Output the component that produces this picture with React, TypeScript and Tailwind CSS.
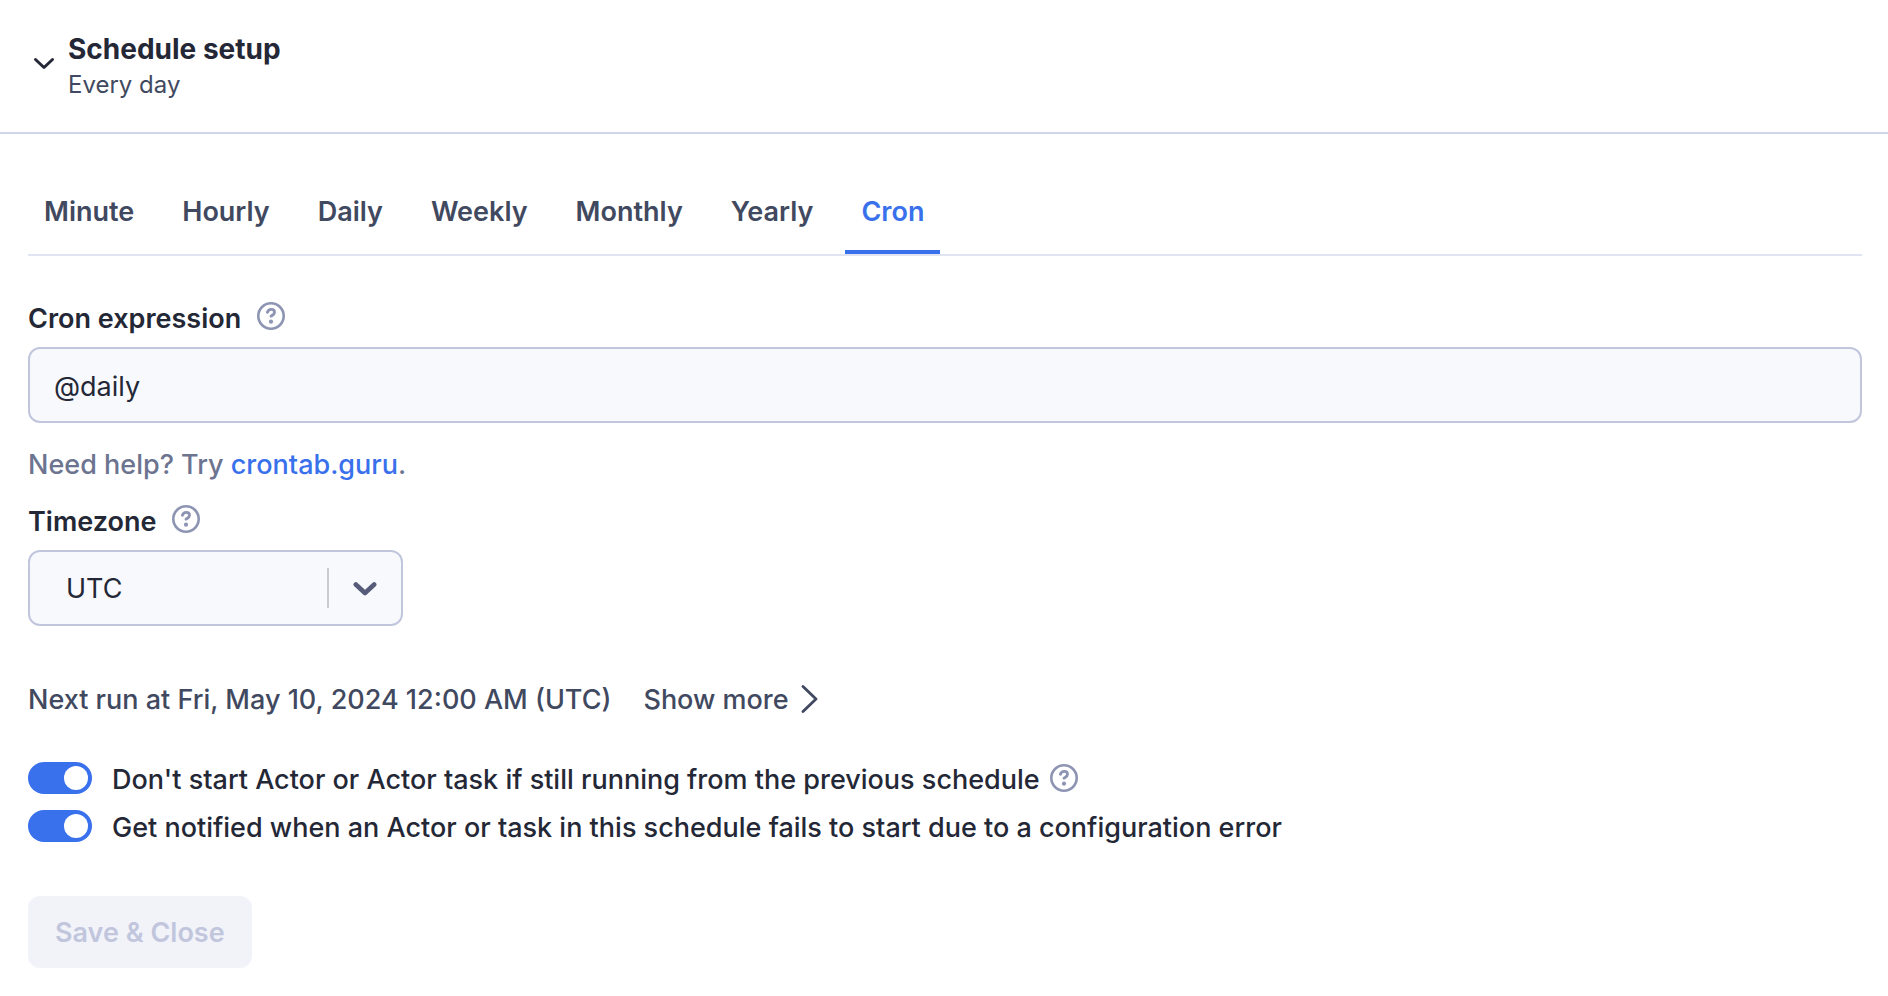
import { useState } from 'react';

const TABS = ['Minute', 'Hourly', 'Daily', 'Weekly', 'Monthly', 'Yearly', 'Cron'];

function HelpIcon() {
  return (
    <svg width="28" height="28" viewBox="0 0 28 28" fill="none" stroke="#8d95b3" aria-hidden="true">
      <circle cx="14" cy="14" r="12.7" strokeWidth="2.6" />
      <path d="M10.4 10.2C11 8.4 12.4 7.4 14.2 7.4C16.2 7.4 17.5 8.6 17.5 10.3C17.5 12.3 15.6 13 14 14.2" strokeWidth="2.9" strokeLinecap="round" strokeLinejoin="round" />
      <circle cx="14" cy="19.7" r="2.1" fill="#8d95b3" stroke="none" />
    </svg>
  );
}

function HelpButton({ label }: { label: string }) {
  return (
    <button type="button" aria-label={label} className="shrink-0">
      <HelpIcon />
    </button>
  );
}

function FieldLabel({ htmlFor, help, children }: { htmlFor: string; help: string; children: string }) {
  return (
    <div className="flex items-start gap-4">
      <label htmlFor={htmlFor} className="font-semibold">{children}</label>
      <span className="flex pt-[3px]"><HelpButton label={help} /></span>
    </div>
  );
}

function Switch({ id }: { id: string }) {
  const [on, setOn] = useState(true);
  return (
    <input
      id={id}
      type="checkbox"
      role="switch"
      checked={on}
      onChange={(e) => setOn(e.target.checked)}
      className="flex h-8 w-16 shrink-0 cursor-pointer appearance-none items-center justify-start rounded-full bg-[#c1c6dd] p-1 before:size-6 before:rounded-full before:bg-white before:content-[''] checked:justify-end checked:bg-[#3970ec]"
    />
  );
}

export default function App() {
  const [tab, setTab] = useState('Cron');
  const [open, setOpen] = useState(true);
  return (
    <main className="min-h-screen bg-white font-['Inter',sans-serif] text-[27px] leading-10 text-[#242836]">
      <header className="border-b-2 border-[#d0d5e9] pt-[29px] pb-[31px] pl-8">
        <button type="button" aria-expanded={open} onClick={() => setOpen(!open)} className="flex items-center gap-3 text-left">
          <svg width="24" height="24" viewBox="0 0 24 24" fill="none" stroke="#242836" strokeWidth="3" strokeLinecap="round" strokeLinejoin="round" aria-hidden="true">
            <path d="M3.5 6.5L12 14.5L20.5 6.5" />
          </svg>
          <span className="flex flex-col">
            <span className="text-[28px] leading-10 font-bold">Schedule setup</span>
            <span className="text-2xl leading-8 text-[#414960]">Every day</span>
          </span>
        </button>
      </header>

      {open && (
        <form className="flex flex-col items-start pt-10 pr-[26px] pl-7" onSubmit={(e) => e.preventDefault()}>
          <div role="tablist" aria-label="Schedule frequency" className="flex gap-4 self-stretch border-b-2 border-[#e0e4f3]">
            {TABS.map((name) => (
              <button
                key={name}
                type="button"
                role="tab"
                aria-selected={tab === name}
                onClick={() => setTab(name)}
                className={
                  tab === name
                    ? 'border-b-4 border-[#3970ec] px-4 py-[18px] font-semibold text-[#3970ec]'
                    : 'border-b-4 border-transparent px-4 py-[18px] font-semibold text-[#414960]'
                }
              >
                {name}
              </button>
            ))}
          </div>

          <div className="mt-[43px]">
            <FieldLabel htmlFor="cron" help="About cron expressions">Cron expression</FieldLabel>
          </div>
          <input
            id="cron"
            type="text"
            defaultValue="@daily"
            className="mt-2 h-19 self-stretch rounded-xl border-2 border-[#c1c6dd] bg-[#f8f9fd] px-6 pt-0.5 outline-none"
          />
          <p className="mt-[22px] font-medium text-[#6c7490]">
            Need help? Try <a href="https://crontab.guru" className="text-[#3970ec]">crontab.guru</a>.
          </p>

          <div className="mt-[17px]">
            <FieldLabel htmlFor="timezone" help="About timezones">Timezone</FieldLabel>
          </div>
          <div className="relative mt-2 w-[375px] max-w-full">
            <select
              id="timezone"
              defaultValue="UTC"
              className="h-19 w-full appearance-none rounded-xl border-2 border-[#c1c6dd] bg-[#f8f9fd] pt-0.5 pr-20 pl-9 outline-none"
            >
              <option>UTC</option>
            </select>
            <div className="pointer-events-none absolute inset-y-0 right-[26px] flex items-center gap-6">
              <span className="h-10 w-0.5 bg-[#cccccc]" />
              <svg width="24" height="24" viewBox="0 0 24 24" fill="none" stroke="#555b78" strokeWidth="4.6" strokeLinecap="round" strokeLinejoin="round" aria-hidden="true">
                <path d="M2.8 8.5L12 17L21.2 8.5" />
              </svg>
            </div>
          </div>

          <div className="mt-[54px] flex items-center gap-8 font-medium text-[#414960]">
            <p>Next run at Fri, May 10, 2024 12:00 AM (UTC)</p>
            <button type="button" className="flex items-center gap-3">
              Show more
              <svg width="20" height="30" viewBox="0 0 20 30" fill="none" stroke="#414960" strokeWidth="2.8" strokeLinecap="round" strokeLinejoin="round" aria-hidden="true">
                <path d="M2 1.5L15 14L2 26.5" />
              </svg>
            </button>
          </div>

          <div className="mt-9 flex flex-col gap-1 font-medium">
            <div className="flex items-center">
              <Switch id="exclusive" />
              <label htmlFor="exclusive" className="ml-5 pt-1">
                Don't start Actor or Actor task if still running from the previous schedule
              </label>
              <span className="ml-2.5 flex"><HelpButton label="About overlapping runs" /></span>
            </div>
            <div className="flex items-center">
              <Switch id="notify" />
              <label htmlFor="notify" className="ml-5 pt-1">
                Get notified when an Actor or task in this schedule fails to start due to a configuration error
              </label>
            </div>
          </div>

          <button type="submit" disabled className="mt-12 rounded-xl bg-[#f2f3f9] px-[27px] pt-[17px] pb-[15px] font-semibold text-[#c1c6dd]">
            Save &amp; Close
          </button>
        </form>
      )}
    </main>
  );
}
